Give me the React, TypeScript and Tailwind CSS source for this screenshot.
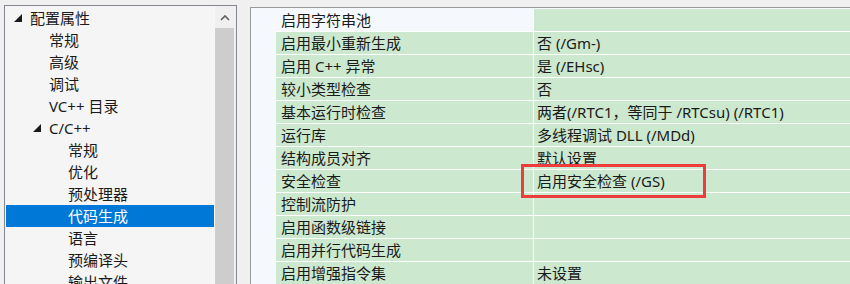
import React from "react";

type TreeItem = { label: string; level: 0 | 1 | 2; expanded?: boolean; selected?: boolean };

const tree: TreeItem[] = [
  { label: "配置属性", level: 0, expanded: true },
  { label: "常规", level: 1 },
  { label: "高级", level: 1 },
  { label: "调试", level: 1 },
  { label: "VC++ 目录", level: 1 },
  { label: "C/C++", level: 1, expanded: true },
  { label: "常规", level: 2 },
  { label: "优化", level: 2 },
  { label: "预处理器", level: 2 },
  { label: "代码生成", level: 2, selected: true },
  { label: "语言", level: 2 },
  { label: "预编译头", level: 2 },
  { label: "输出文件", level: 2 },
];

const rows: { name: string; value: string; header?: boolean }[] = [
  { name: "启用字符串池", value: "", header: true },
  { name: "启用最小重新生成", value: "否 (/Gm-)" },
  { name: "启用 C++ 异常", value: "是 (/EHsc)" },
  { name: "较小类型检查", value: "否" },
  { name: "基本运行时检查", value: "两者(/RTC1，等同于 /RTCsu) (/RTC1)" },
  { name: "运行库", value: "多线程调试 DLL (/MDd)" },
  { name: "结构成员对齐", value: "默认设置" },
  { name: "安全检查", value: "启用安全检查 (/GS)" },
  { name: "控制流防护", value: "" },
  { name: "启用函数级链接", value: "" },
  { name: "启用并行代码生成", value: "" },
  { name: "启用增强指令集", value: "未设置" },
];

const levelPad: Record<number, string> = {
  0: "pl-[8px]",
  1: "pl-[27px]",
  2: "pl-[46px]",
};

function Triangle({ color }: { color: string }) {
  return (
    <svg width="8" height="8" viewBox="0 0 8 8" className="mt-[-1px]">
      <polygon points="8,0 8,8 0,8" fill={color} />
    </svg>
  );
}

export default function App() {
  return (
    <div
      className="relative w-[850px] h-[284px] overflow-hidden bg-[#f0f0f0] flex items-start pl-[4px] pt-[5px] text-[15px] text-[#1a1a1a]"
      style={{ fontFamily: '"Noto Sans", "Noto Sans CJK SC", sans-serif' }}
    >
      {/* Left tree panel */}
      <div className="w-[233px] h-[300px] shrink-0 border-l border-t border-r border-[#828790] bg-[#f5f5f5] flex">
        <div className="flex-1 pt-[1px] pl-[1px]">
          {tree.map((t, i) => (
            <div
              key={i}
              className={`h-[22px] flex items-center ${levelPad[t.level]} ${
                t.selected ? "bg-[#0078d7] text-white" : ""
              }`}
            >
              <div className="w-[16px] h-[22px] flex items-center shrink-0">
                {t.expanded ? <Triangle color="#1a1a1a" /> : null}
              </div>
              <span className="leading-[22px] whitespace-nowrap">{t.label}</span>
            </div>
          ))}
        </div>
        <div className="w-[22px] shrink-0 bg-[#f0f0f0] border-l border-[#f7f7f7] flex flex-col">
          <div className="h-[22px] flex items-center justify-center pr-[2px]">
            <svg width="10" height="7" viewBox="0 0 10 7">
              <path d="M1 6 L5 2 L9 6" stroke="#606060" strokeWidth="1.6" fill="none" />
            </svg>
          </div>
          <div className="ml-[0px] mr-[2px] flex-1 bg-[#cdcdcd]" />
        </div>
      </div>

      {/* Right property grid */}
      <div className="ml-[13px] mt-[2px] flex-1 h-[300px] border-l border-t border-[#999999] bg-[#f5f8fc] flex pt-[1px]">
        <div className="w-[25px] shrink-0" />
        <div className="flex-1 flex flex-col">
          {rows.map((r, i) => (
            <div key={i} className="flex h-[23px] border-b border-white">
              <div
                className={`w-[258px] shrink-0 pl-[5px] flex items-center whitespace-nowrap border-r border-white ${
                  r.header ? "bg-[#f5f8fc]" : "bg-[#cce8cf]"
                }`}
              >
                <span className="leading-[22px]">{r.name}</span>
              </div>
              <div className="flex-1 pl-[3px] bg-[#cce8cf] flex items-center whitespace-nowrap">
                <span className="leading-[22px]">{r.value}</span>
              </div>
            </div>
          ))}
        </div>
      </div>

      {/* Red annotation box */}
      <div className="absolute left-[521px] top-[164px] w-[185px] h-[34px] border-[3px] border-[#ee3b3b]" />
    </div>
  );
}
